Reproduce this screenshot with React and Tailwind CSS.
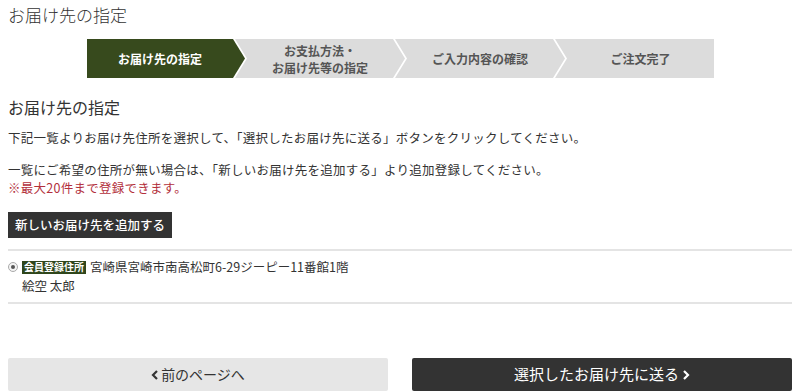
import React from 'react';

const font = { fontFamily: '"Noto Sans CJK JP", "Noto Sans", sans-serif' };

const steps = [
  { label: ['お届け先の指定'], active: true, w: 'w-[158px]', clip: '[clip-path:polygon(0_0,calc(100%-12px)_0,100%_50%,calc(100%-12px)_100%,0_100%)]' },
  { label: ['お支払方法・', 'お届け先等の指定'], w: 'w-[170px] -ml-[10px]', clip: '[clip-path:polygon(0_0,calc(100%-12px)_0,100%_50%,calc(100%-12px)_100%,0_100%,12px_50%)]' },
  { label: ['ご入力内容の確認'], w: 'w-[170px] -ml-[10px]', clip: '[clip-path:polygon(0_0,calc(100%-12px)_0,100%_50%,calc(100%-12px)_100%,0_100%,12px_50%)]' },
  { label: ['ご注文完了'], w: 'w-[159px] -ml-[10px]', clip: '[clip-path:polygon(0_0,100%_0,100%_100%,0_100%,12px_50%)]' },
];

export default function App() {
  return (
    <div className="w-[800px] h-[392px] bg-white text-[#333] overflow-hidden" style={font}>
      <div className="px-2">
        {/* Page title */}
        <h1 className="pt-[3px] text-[17px] leading-[24px] font-light text-[#333]">お届け先の指定</h1>

        {/* Steps */}
        <div className="flex mt-[12px] ml-[79px] h-[39px]">
          {steps.map((s, i) => (
            <div
              key={i}
              className={`${s.w} ${s.clip} h-full flex flex-col items-center justify-center text-[12px] leading-[17px] font-bold ${s.active ? 'bg-[#374a1d] text-white' : 'bg-[#dcdcdc] text-[#555]'} ${i === 0 ? 'pr-[12px]' : i === 3 ? 'pl-[12px]' : 'pl-[12px] pr-[12px]'}`}
            >
              {s.label.map(l => <span key={l}>{l}</span>)}
            </div>
          ))}
        </div>

        {/* Section */}
        <h2 className="mt-[18px] text-[16px] leading-[22px] font-normal">お届け先の指定</h2>
        <p className="mt-[11px] text-[12.5px] leading-[18px] tracking-[0.02em]">下記一覧よりお届け先住所を選択して、「選択したお届け先に送る」ボタンをクリックしてください。</p>
        <p className="mt-[14px] text-[12.5px] leading-[18px] tracking-[0.02em]">一覧にご希望の住所が無い場合は、「新しいお届け先を追加する」より追加登録してください。</p>
        <p className="text-[12.5px] leading-[18px] tracking-[0.02em] text-[#b3303c]">※最大20件まで登録できます。</p>

        <button className="mt-[15px] h-[26px] px-[7px] bg-[#333] text-white text-[12.5px] font-medium">新しいお届け先を追加する</button>

        {/* Address list */}
        <div className="mt-[11px] border-t-2 border-b-2 border-[#e4e4e4] pt-[7px] pb-[6px]">
          <div className="flex items-center gap-[4px] h-[18px]">
            <span className="w-[10px] h-[10px] rounded-full border border-[#aaa] bg-[#f4f4f4] flex items-center justify-center">
              <span className="w-[4px] h-[4px] rounded-full bg-[#555]"></span>
            </span>
            <span className="px-[2px] h-[13px] flex items-center bg-[#2f461b] text-white text-[10px] font-bold leading-none">会員登録住所</span>
            <span className="text-[12.5px]">宮崎県宮崎市南高松町6-29ジーピー11番館1階</span>
          </div>
          <div className="pl-[14px] text-[12.5px] leading-[20px]">絵空 太郎</div>
        </div>

        {/* Footer buttons */}
        <div className="mt-[54px] flex justify-between">
          <button className="w-[380px] h-[33px] rounded-[2px] bg-[#e6e6e6] text-[#333] text-[14px] flex items-center justify-center">
            <svg width="8" height="10" viewBox="0 0 8 10" className="mr-[2px]"><path d="M6 1 L2 5 L6 9" fill="none" stroke="#333" strokeWidth="2.2" /></svg>
            前のページへ
          </button>
          <button className="w-[380px] h-[33px] rounded-[2px] bg-[#333] text-white text-[15px] flex items-center justify-center">
            選択したお届け先に送る
            <svg width="8" height="10" viewBox="0 0 8 10" className="ml-[3px]"><path d="M2 1 L6 5 L2 9" fill="none" stroke="#fff" strokeWidth="2.2" /></svg>
          </button>
        </div>
      </div>
    </div>
  );
}
